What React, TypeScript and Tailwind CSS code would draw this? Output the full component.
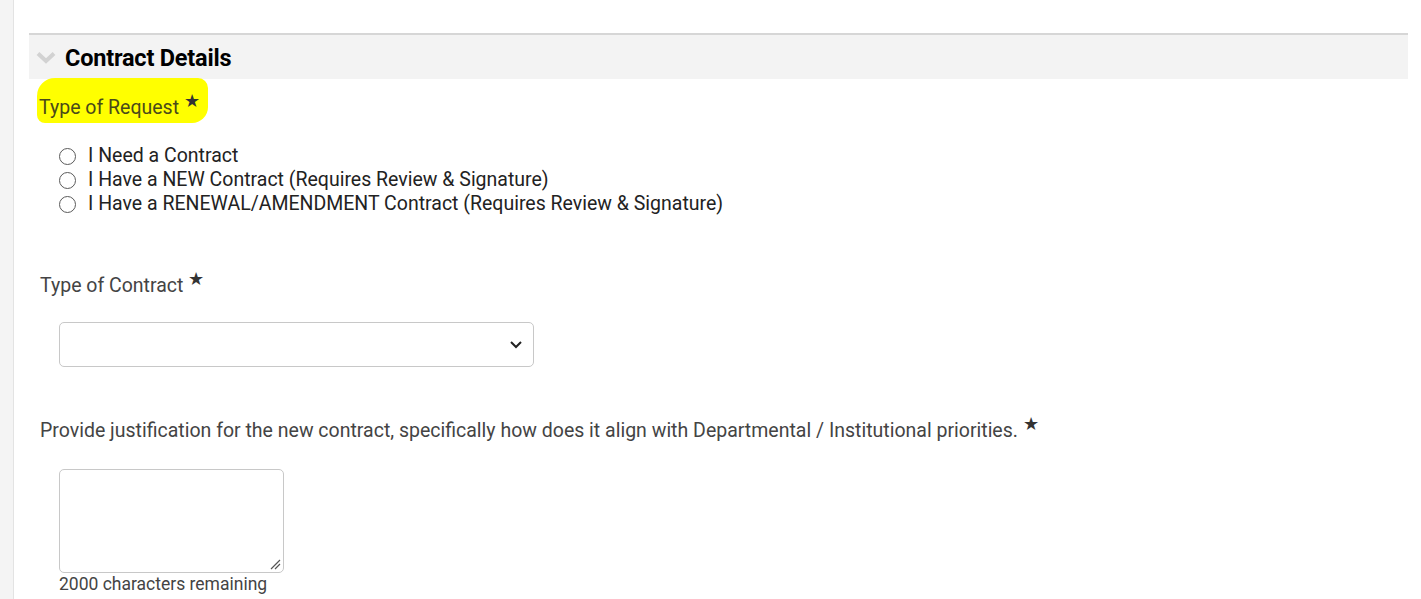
import React from 'react';

const font = { fontFamily: 'Roboto, "Liberation Sans", sans-serif' };

const options = [
  "I Need a Contract",
  "I Have a NEW Contract (Requires Review & Signature)",
  "I Have a RENEWAL/AMENDMENT Contract (Requires Review & Signature)"
];

function Star() {
  return <span className="ml-[5px] relative -top-[7px] text-[18px] text-[#333]">★</span>;
}

export default function App() {
  return (
    <div className="flex min-h-[599px] bg-white" style={font}>
      <div className="w-[14px] shrink-0 bg-[#f4f4f4] border-r border-[#e3e3e3]" />
      <div className="flex-1 pl-[15px] pr-[13px] pt-[33px]">
        <div className="flex items-center h-[46px] bg-[#f3f3f3] border-t-2 border-[#d6d6d6]">
          <svg width="20" height="13" viewBox="0 0 20 13" className="ml-[7px] mt-[1px]">
            <path d="M2 2.5 L10 10 L18 2.5" fill="none" stroke="#d2d2d2" strokeWidth="4" />
          </svg>
          <h2 className="ml-[9px] mt-[3px] text-[23.5px] font-bold text-black tracking-[-0.2px]">Contract Details</h2>
        </div>

        <div className="pl-[11px]">
          <div className="-ml-[3px] -mt-[1px] inline-block bg-[#ffff00] rounded-tl-[18px] rounded-tr-[10px] rounded-br-[16px] rounded-bl-[8px] pl-[2px] pr-[8px] pt-[18px] pb-[3px] text-[19.5px] leading-[24px] text-[#4a4a1a]">
            Type of Request<Star />
          </div>

          <div className="ml-[19px] mt-[21px] flex flex-col">
            {options.map((o) => (
              <label key={o} className="flex items-center h-[24px] text-[19.5px] text-[#222]">
                <span className="w-[17px] h-[17px] rounded-full border-[1.5px] border-[#5a5a5a] bg-white" />
                <span className="ml-[12px]">{o}</span>
              </label>
            ))}
          </div>

          <div className="mt-[58px] text-[19.5px] leading-[24px] text-[#444]">
            Type of Contract<Star />
          </div>

          <div className="ml-[19px] mt-[24px] w-[475px] h-[45px] rounded-[5px] border border-[#c8c8c8] flex items-center justify-end pr-[10px]">
            <svg width="14" height="9" viewBox="0 0 14 9">
              <path d="M2 2 L7 7 L12 2" fill="none" stroke="#222" strokeWidth="2" />
            </svg>
          </div>

          <div className="mt-[52px] text-[19.5px] leading-[24px] text-[#444]">
            Provide justification for the new contract, specifically how does it align with Departmental / Institutional priorities.<Star />
          </div>

          <div className="ml-[19px] mt-[26px] relative w-[225px] h-[104px] rounded-[5px] border border-[#c8c8c8]">
            <svg width="12" height="12" viewBox="0 0 12 12" className="absolute right-[2px] bottom-[2px]">
              <path d="M2 11 L11 2 M6 11 L11 6" stroke="#555" strokeWidth="1.2" />
            </svg>
          </div>
          <div className="ml-[19px] mt-[1px] text-[17.5px] leading-[20px] text-[#444]">2000 characters remaining</div>
        </div>
      </div>
    </div>
  );
}
